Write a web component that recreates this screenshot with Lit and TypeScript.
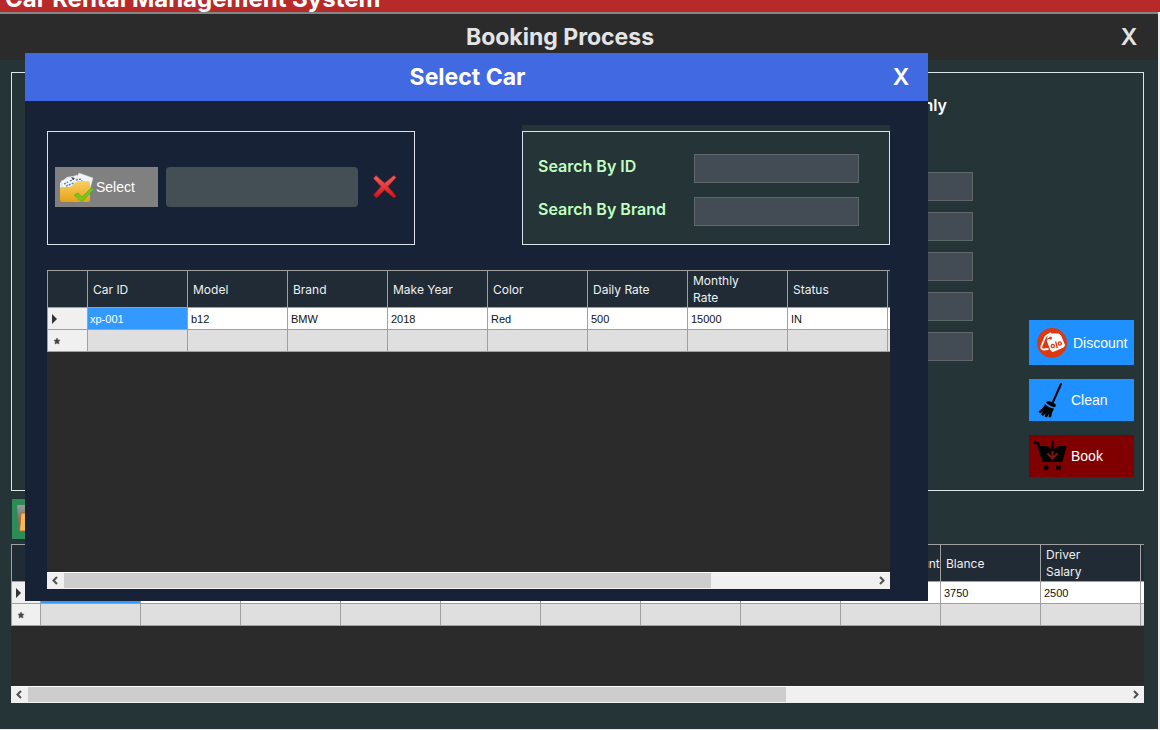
import { LitElement, html, css } from "lit";
import { customElement, property } from "lit/decorators.js";

interface Column {
  label: string;
  value: string;
}

const carColumns: Column[] = [
  { label: "Car ID", value: "xp-001" },
  { label: "Model", value: "b12" },
  { label: "Brand", value: "BMW" },
  { label: "Make Year", value: "2018" },
  { label: "Color", value: "Red" },
  { label: "Daily Rate", value: "500" },
  { label: "Monthly Rate", value: "15000" },
  { label: "Status", value: "IN" },
  { label: "", value: "" },
];

const bookingColumns: Column[] = [
  ...Array.from({ length: 8 }, () => ({ label: "", value: "" })),
  { label: "AdvanceAmount", value: "" },
  { label: "Blance", value: "3750" },
  { label: "Driver Salary", value: "2500" },
  { label: "", value: "" },
];

const COLUMN_WIDTH = 100;

@customElement("data-grid")
export class DataGrid extends LitElement {
  @property({ attribute: false }) columns: Column[] = [];
  @property({ type: Number }) stub = 40;
  @property({ type: Number }) thumb = 80;
  @property() name = "";

  static styles = css`
    :host {
      display: flex;
      flex-direction: column;
      background: #2b2b2b;
      overflow: hidden;
    }
    .view {
      flex: 1;
      overflow: hidden;
    }
    table {
      table-layout: fixed;
      border-collapse: separate;
      border-spacing: 0;
      border-top: 1px solid #a0a0a0;
      border-left: 1px solid #a0a0a0;
    }
    th,
    td {
      box-sizing: border-box;
      border-right: 1px solid #a0a0a0;
      border-bottom: 1px solid #a0a0a0;
      overflow: hidden;
      text-align: left;
      vertical-align: middle;
    }
    .head {
      height: 37px;
      padding: 0 24px 0 5px;
      background: #202b36;
      color: #f0f0f0;
      font: 400 12px/17px Inter, sans-serif;
    }
    .stub {
      height: 22px;
      padding: 0 0 0 4px;
      background: #f0f0f0;
    }
    .stub svg {
      display: block;
    }
    .cell {
      height: 22px;
      padding: 0 3px;
      background: #fff;
      color: #111;
      font: 400 11px/14px "Liberation Sans", sans-serif;
    }
    .picked {
      padding: 0 2px;
      background: #3399ff;
      color: #fff;
    }
    .blank {
      background: #dfdfdf;
    }
    .bar {
      display: flex;
      height: 17px;
      background: #f0f0f0;
      box-shadow: inset 0 1px #fff;
    }
    .arrow {
      width: 17px;
      height: 17px;
      padding: 0;
      border: 0;
      background: none;
    }
    .arrow svg {
      display: block;
    }
    .track {
      flex: 1;
      padding: 1px 0;
    }
    .thumb {
      height: 15px;
      background: #cdcdcd;
    }
  `;

  render() {
    const width = this.stub + this.columns.length * COLUMN_WIDTH + 1;
    return html`
      <div class="view">
        <table style="width:${width}px" aria-label=${this.name}>
          <colgroup>
            <col style="width:${this.stub}px" />
            ${this.columns.map(() => html`<col style="width:${COLUMN_WIDTH}px" />`)}
          </colgroup>
          <thead>
            <tr>
              <th class="head"></th>
              ${this.columns.map((c) => html`<th class="head">${c.label}</th>`)}
            </tr>
          </thead>
          <tbody>
            <tr>
              <td class="stub">
                <svg width="8" height="10" viewBox="0 0 8 10"><path d="M0 0 5 5 0 10Z" fill="#333" /></svg>
              </td>
              ${this.columns.map((c, i) => html`<td class="cell ${i === 0 ? "picked" : ""}">${c.value}</td>`)}
            </tr>
            <tr>
              <td class="stub">
                <svg width="10" height="8" viewBox="0 0 10 8">
                  <path d="M5 1 6 3 8 3.200 6.600 4.800 7 7 5 6 3 7 3.400 4.800 2 3.200 4 3Z" fill="#444" stroke="#444" stroke-width=".5" />
                </svg>
              </td>
              ${this.columns.map(() => html`<td class="cell blank"></td>`)}
            </tr>
          </tbody>
        </table>
      </div>
      <div class="bar">
        <button class="arrow" aria-label="Scroll left">${this.chevron("M10 5 6.500 8.500 10 12")}</button>
        <div class="track"><div class="thumb" style="width:${this.thumb}%"></div></div>
        <button class="arrow" aria-label="Scroll right">${this.chevron("M7 5 10.500 8.500 7 12")}</button>
      </div>
    `;
  }

  private chevron(d: string) {
    return html`<svg width="17" height="17" viewBox="0 0 17 17">
      <path d=${d} fill="none" stroke="#505050" stroke-width="2" />
    </svg>`;
  }
}

const folderIcon = html`<svg width="36" height="32" viewBox="0 0 36 32" aria-hidden="true">
  <defs>
    <linearGradient id="fold" x1="0" y1="0" x2="0" y2="1">
      <stop offset="0" stop-color="#f8cf62" />
      <stop offset="1" stop-color="#e5a315" />
    </linearGradient>
  </defs>
  <path d="M1 12 8 6 14 5 14 17 1 17z" fill="#e9eef2" />
  <path d="M2 10 18 4 22 14 4 18z" fill="#f6f8fa" stroke="#cdd3d8" stroke-width=".5" />
  <path d="M20 2 34 7 31 18 14 14z" fill="#f1f4f6" stroke="#cdd3d8" stroke-width=".5" />
  <path d="M5 13l4-2M11 10l4-2M7 15l8-3M17 9l5-1M22 10l8 2" stroke="#5c86a8" stroke-width="1.500" stroke-dasharray="2 1" />
  <path d="M12 6l4 1-2 2z" fill="#445" />
  <path d="M1 18q0-2 2-2h7q3 0 5-3 2-3 5-3h9q2 0 2 2v17q0 2-2 2H3q-2 0-2-2z" fill="url(#fold)" />
  <path d="M15 24l4-2 4 4 9-9 3 1-12 13z" fill="#76c41f" stroke="#5da512" stroke-width=".6" />
</svg>`;

const crossIcon = html`<svg width="24" height="24" viewBox="0 0 24 24" aria-hidden="true">
  <defs>
    <linearGradient id="red" x1="0" y1="0" x2="0" y2="1">
      <stop offset="0" stop-color="#f2625c" />
      <stop offset="1" stop-color="#d60f14" />
    </linearGradient>
  </defs>
  <path
    d="M.5 3.500 3 .5 11.500 8 21 .5 23 2.500 15 11.500 23 21 21 23 11.500 15 3.500 23 .5 20 8 11.500Z"
    fill="url(#red)"
    stroke="#b81419"
    stroke-width=".5"
    stroke-linejoin="round"
  />
</svg>`;

const discountIcon = html`<svg width="32" height="32" viewBox="0 0 32 32" aria-hidden="true">
  <circle cx="16" cy="16" r="15" fill="#dc3912" />
  <path d="M15 6 9.500 9.500 5.500 19q-1 3 2 3.500l5-.5" fill="none" stroke="#fff" stroke-width="1.800" stroke-linejoin="round" />
  <path
    d="M12 9.500 15 7 22.500 7 24.500 8.500 28.500 18 27.500 20 17 24.500 15 23.500 11 13Z"
    fill="#fff"
    stroke="#fff"
    stroke-linejoin="round"
  />
  <circle cx="14.500" cy="11" r="1.500" fill="#dc3912" />
  <path d="M14.500 11q-5 0-6 7" fill="none" stroke="#dc3912" stroke-width="1.200" />
  <g fill="none" stroke="#dc3912" stroke-width="1.300">
    <circle cx="16.800" cy="19" r="1.600" />
    <circle cx="23.800" cy="16.500" r="1.600" />
    <path d="M19.600 14.500 21.300 21" />
  </g>
</svg>`;

const broomIcon = html`<svg width="26" height="36" viewBox="0 0 26 36" aria-hidden="true">
  <path d="M23 2 15 20" stroke="#000" stroke-width="2" stroke-linecap="round" />
  <path d="M8 20.500q1-1.500 3-1.300 4 .6 6.500 3 .8 1.500-.5 3Q12 24.500 8 20.500z" fill="#000" />
  <path
    d="M7 22Q11 26 16 26.500 13.500 31 13 35.500L10.500 35 11 31.500 9 35.500 6.500 34.500 8 31 5 34 3 32.500 5.500 29 2 31.500.5 29.500Q5 27 7 22z"
    fill="#000"
  />
</svg>`;

const cartIcon = html`<svg width="34" height="32" viewBox="0 0 34 32" aria-hidden="true">
  <path d="M1.500 2.500 5 3.500 10 19" fill="none" stroke="#000" stroke-width="2.600" stroke-linecap="round" />
  <path d="M6 6.500H14l5.500 4 5.500-4H33L29 21.500H10z" fill="#000" stroke="#000" stroke-linejoin="round" />
  <path d="M19.500 10v8.500M14.500 13.500l5 5 5-5" fill="none" stroke="#8a1010" stroke-width="2" />
  <path d="M19.500 1v10" stroke="#000" stroke-width="2.200" />
  <circle cx="13" cy="27.500" r="2.500" fill="#000" />
  <circle cx="25.500" cy="27.500" r="2.500" fill="#000" />
</svg>`;

const clipboardIcon = html`<svg width="32" height="32" viewBox="0 0 32 32" aria-hidden="true">
  <defs>
    <linearGradient id="steel" x1="0" y1="0" x2="0" y2="1">
      <stop offset="0" stop-color="#989c99" />
      <stop offset="1" stop-color="#555b57" />
    </linearGradient>
  </defs>
  <path d="M1 2h26v26H3z" fill="url(#steel)" />
  <path d="M5 10h22v18H3.500z" fill="#fbb65a" stroke="#b86a1a" />
</svg>`;

@customElement("app-root")
export class AppRoot extends LitElement {
  static styles = css`
    :host {
      display: block;
      font-family: Inter, sans-serif;
    }
    * {
      box-sizing: border-box;
    }
    .page {
      display: flex;
      flex-direction: column;
      min-height: 100vh;
      background: #eceeee;
    }
    .banner {
      display: flex;
      align-items: flex-end;
      height: 12px;
      padding-left: 5px;
      overflow: hidden;
      background: #b82a2a;
    }
    .brand {
      margin: 0;
      color: #fff;
      font: 700 24px/26px Inter, sans-serif;
      white-space: nowrap;
    }
    .window {
      position: relative;
      flex: 1;
      display: flex;
      flex-direction: column;
      margin: 0 2px 1px 0;
      border-top: 2px solid #858585;
      background: #243437;
    }
    .bar {
      display: flex;
      align-items: center;
      flex: none;
    }
    .title {
      flex: 1;
      margin: 0;
      text-align: center;
      font: 700 23px/28px Inter, sans-serif;
    }
    .close {
      width: 18px;
      padding: 0;
      border: 0;
      background: none;
      color: inherit;
      font: 600 23px/28px Inter, sans-serif;
    }
    .main-bar {
      height: 46px;
      padding-right: 20px;
      background: #2b2b2b;
      color: #e4e4e4;
    }
    .content {
      flex: 1;
      display: flex;
      flex-direction: column;
      align-items: stretch;
      padding: 12px 14px 26px 11px;
    }
    .details {
      display: flex;
      justify-content: flex-end;
      align-items: flex-end;
      gap: 56px;
      min-height: 419px;
      padding: 22px 9px 13px;
      border: 1px solid #dce6e6;
    }
    .fields {
      display: flex;
      flex-direction: column;
      align-self: stretch;
      gap: 11px;
      width: 165px;
    }
    .period {
      display: flex;
      align-items: center;
      justify-content: flex-end;
      gap: 6px;
      height: 20px;
      margin-bottom: 46px;
      padding-right: 26px;
      color: #fff;
      font: 600 16px/20px Inter, sans-serif;
    }
    .period input {
      margin: 0;
    }
    .field {
      width: 165px;
      height: 29px;
      padding: 0 6px;
      border: 1px solid #60676a;
      border-radius: 0;
      background: #434c55;
      color: #fff;
    }
    .actions {
      display: flex;
      flex-direction: column;
      gap: 14px;
      width: 105px;
    }
    .btn {
      display: flex;
      align-items: center;
      height: 42px;
      padding: 0;
      border: 0;
      color: #fff;
      font: 400 14px/18px "Liberation Sans", sans-serif;
    }
    .btn svg {
      flex: none;
    }
    .discount {
      height: 45px;
      padding-left: 7px;
      gap: 5px;
      background: #1e90ff;
    }
    .clean {
      padding-left: 9px;
      gap: 7px;
      background: #1e90ff;
    }
    .book {
      padding-left: 4px;
      gap: 4px;
      background: #800000;
    }
    .load {
      align-self: flex-start;
      width: 104px;
      height: 40px;
      margin: 8px 0 5px 1px;
      padding-left: 4px;
      background: #2e8b57;
    }
    .bookings {
      flex: 1;
      min-height: 159px;
    }
    .modal {
      position: absolute;
      top: 39px;
      left: 25px;
      right: 230px;
      display: flex;
      flex-direction: column;
      background: #182236;
    }
    .modal-bar {
      height: 48px;
      padding: 0 18px 0 18px;
      background: #4169e1;
      color: #fff;
    }
    .modal-body {
      display: flex;
      flex-direction: column;
      gap: 25px;
      padding: 24px 38px 12px 22px;
    }
    .boxes {
      display: flex;
      justify-content: space-between;
    }
    .box {
      width: 368px;
      padding-top: 6px;
    }
    .tinted {
      background: #243437;
    }
    .frame {
      height: 114px;
      border: 1px solid #dce2ea;
    }
    .choice {
      display: flex;
      align-items: center;
      gap: 8px;
      padding: 0 7px 2px;
    }
    .select {
      width: 103px;
      height: 40px;
      gap: 1px;
      padding-left: 4px;
      background: #808080;
    }
    .chosen {
      width: 192px;
      height: 40px;
      padding: 0 8px;
      border: 0;
      border-radius: 4px;
      background: #434e55;
      color: #fff;
    }
    .clear {
      margin-left: 7px;
      padding: 0;
      border: 0;
      background: none;
    }
    .clear svg {
      display: block;
    }
    .search {
      display: grid;
      grid-template-columns: 156px 165px;
      align-content: start;
      row-gap: 14px;
      padding: 22px 15px 0;
    }
    .search-label {
      color: #c0ffc0;
      font: 600 16px/24px Inter, sans-serif;
    }
    .cars {
      min-height: 319px;
    }
  `;

  render() {
    return html`
      <div class="page">
        <header class="banner"><h1 class="brand">Car Rental Management System</h1></header>
        <main class="window">
          <div class="bar main-bar">
            <h2 class="title">Booking Process</h2>
            <button class="close">X</button>
          </div>
          <div class="content">
            <section class="details">
              <div class="fields">
                <label class="period"><input type="radio" name="period" />Monthly</label>
                ${[1, 2, 3, 4, 5].map((n) => html`<input class="field" type="text" aria-label="Amount ${n}" />`)}
              </div>
              <div class="actions">
                <button class="btn discount">${discountIcon}Discount</button>
                <button class="btn clean">${broomIcon}Clean</button>
                <button class="btn book">${cartIcon}Book</button>
              </div>
            </section>
            <button class="btn load" aria-label="Load">${clipboardIcon}</button>
            <data-grid class="bookings" name="Bookings" .columns=${bookingColumns} .stub=${29} .thumb=${69}></data-grid>
          </div>
          <section class="modal" role="dialog" aria-label="Select Car">
            <div class="bar modal-bar">
              <h2 class="title">Select Car</h2>
              <button class="close">X</button>
            </div>
            <div class="modal-body">
              <div class="boxes">
                <div class="box">
                  <div class="frame choice">
                    <button class="btn select">${folderIcon}Select</button>
                    <input class="chosen" type="text" aria-label="Selected car" />
                    <button class="clear" aria-label="Clear">${crossIcon}</button>
                  </div>
                </div>
                <div class="box tinted">
                  <div class="frame search">
                    <label class="search-label" for="by-id">Search By ID</label>
                    <input class="field" id="by-id" type="text" />
                    <label class="search-label" for="by-brand">Search By Brand</label>
                    <input class="field" id="by-brand" type="text" />
                  </div>
                </div>
              </div>
              <data-grid class="cars" name="Cars" .columns=${carColumns} .stub=${40} .thumb=${80}></data-grid>
            </div>
          </section>
        </main>
      </div>
    `;
  }
}
